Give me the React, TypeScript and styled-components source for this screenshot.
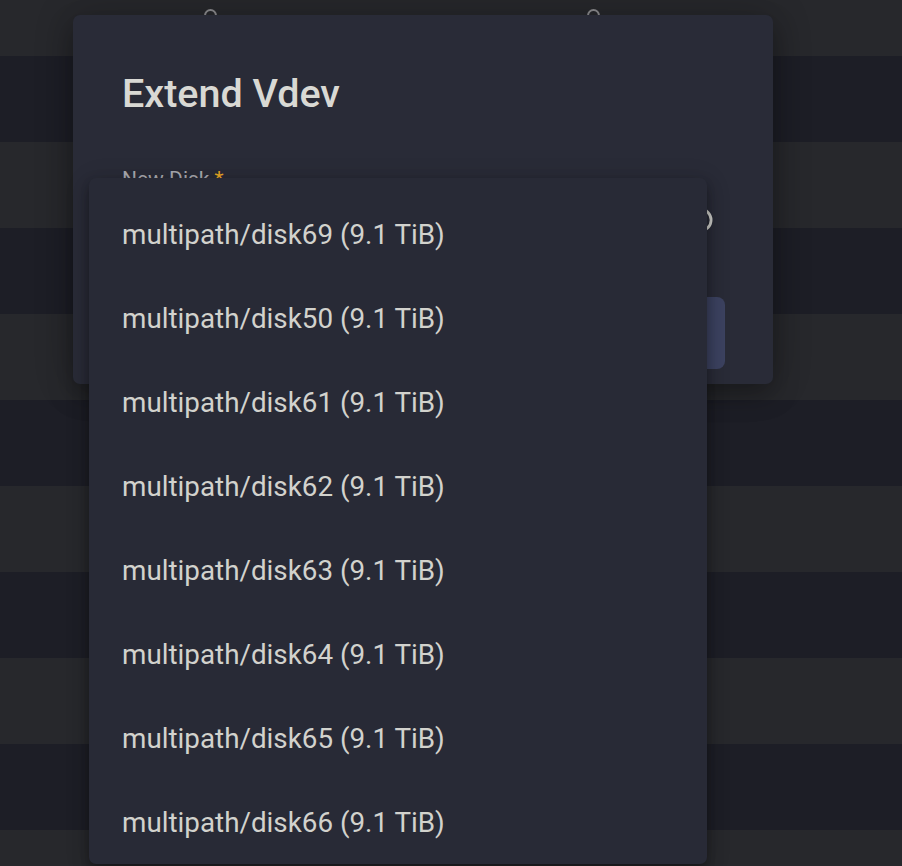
import React from "react";
import styled, { createGlobalStyle } from "styled-components";

const Global = createGlobalStyle`
  html, body { margin: 0; padding: 0; background: #1d1e26; }
  body { font-family: Roboto, "Liberation Sans", sans-serif; }
`;

const Page = styled.div`
  position: relative;
  width: 902px;
  height: 866px;
  overflow: hidden;
  background: #1d1e26;
`;

const Rows = styled.div`
  display: flex;
  flex-direction: column;
`;

const Row = styled.div<{ $light: boolean; $h: number }>`
  height: ${(p) => p.$h}px;
  flex: none;
  background: ${(p) => (p.$light ? "#27282c" : "#1d1e26")};
  display: flex;
  align-items: flex-start;
  position: relative;
`;

const TopCells = styled.div`
  display: flex;
  gap: 370px;
  padding: 9px 0 0 204px;
`;

const Ring = styled.span`
  width: 13px;
  height: 13px;
  box-sizing: border-box;
  border: 2px solid #8d8d90;
  border-radius: 50%;
`;

const Dialog = styled.div`
  position: absolute;
  left: 73px;
  top: 15px;
  width: 700px;
  height: 369px;
  box-sizing: border-box;
  padding: 55px 48px 0 49px;
  background: #292b37;
  border-radius: 7px;
  box-shadow: 0 11px 26px rgba(0, 0, 0, 0.28), 0 0 40px rgba(0, 0, 0, 0.2);
  display: flex;
  flex-direction: column;
`;

const Title = styled.h2`
  margin: 0;
  font-size: 39.5px;
  line-height: 48px;
  font-weight: 500;
  color: #d9d9d4;
`;

const Label = styled.div`
  margin-top: 49px;
  font-size: 21px;
  line-height: 25px;
  color: #a9aab0;
`;

const Req = styled.span`
  color: #e9a825;
  margin-left: 5px;
`;

const FieldRow = styled.div`
  margin-top: 8px;
  height: 40px;
  display: flex;
  align-items: center;
  padding-right: 11px;
`;

const Value = styled.div`
  flex: 1;
  font-size: 28px;
  color: #d4d4cf;
`;

const HelpIcon = styled.svg`
  width: 28px;
  height: 28px;
  flex: none;
  color: #d0d0cb;
`;

const Actions = styled.div`
  margin-top: 57px;
  display: flex;
  justify-content: flex-end;
`;

const PrimaryButton = styled.button`
  width: 200px;
  height: 72px;
  border: none;
  border-radius: 8px;
  background: #3c4260;
  color: #d9d9e4;
  font-family: Roboto, "Liberation Sans", sans-serif;
  font-size: 25px;
  font-weight: 500;
`;

const Menu = styled.div`
  position: absolute;
  left: 89px;
  top: 178px;
  width: 618px;
  height: 686px;
  box-sizing: border-box;
  padding-top: 14px;
  background: #282a36;
  border-radius: 7px;
  overflow: hidden;
  box-shadow: 0 5px 9px rgba(0, 0, 0, 0.2), 0 8px 18px rgba(0, 0, 0, 0.18),
    0 3px 26px rgba(0, 0, 0, 0.14);
`;

const Option = styled.div`
  height: 84px;
  display: flex;
  align-items: center;
  padding-left: 33px;
  font-size: 27.8px;
  color: #d2d2cd;
  white-space: nowrap;
`;

const bands: { light: boolean; h: number }[] = [
  { light: true, h: 56 },
  ...Array.from({ length: 10 }, (_, i) => ({ light: i % 2 === 1, h: 86 })),
];

const disks = ["69", "50", "61", "62", "63", "64", "65", "66"];

export default function App() {
  return (
    <>
      <Global />
      <Page>
        <Rows>
          {bands.map((b, i) => (
            <Row key={i} $light={b.light} $h={b.h}>
              {i === 0 && (
                <TopCells>
                  <Ring />
                  <Ring />
                </TopCells>
              )}
            </Row>
          ))}
        </Rows>
        <Dialog>
          <Title>Extend Vdev</Title>
          <Label>
            New Disk<Req>*</Req>
          </Label>
          <FieldRow>
            <Value />
            <HelpIcon viewBox="0 0 24 24" fill="none">
              <circle cx="12" cy="12" r="9.5" stroke="currentColor" strokeWidth="2.4" />
              <path
                d="M9.5 9.5a2.5 2.5 0 1 1 3.5 2.3c-.7.3-1 .8-1 1.5V14"
                stroke="currentColor"
                strokeWidth="2"
                strokeLinecap="round"
              />
              <circle cx="12" cy="17" r="1.1" fill="currentColor" />
            </HelpIcon>
          </FieldRow>
          <Actions>
            <PrimaryButton>Extend</PrimaryButton>
          </Actions>
        </Dialog>
        <Menu role="listbox">
          {disks.map((d) => (
            <Option key={d} role="option">
              multipath/disk{d} (9.1 TiB)
            </Option>
          ))}
        </Menu>
      </Page>
    </>
  );
}
